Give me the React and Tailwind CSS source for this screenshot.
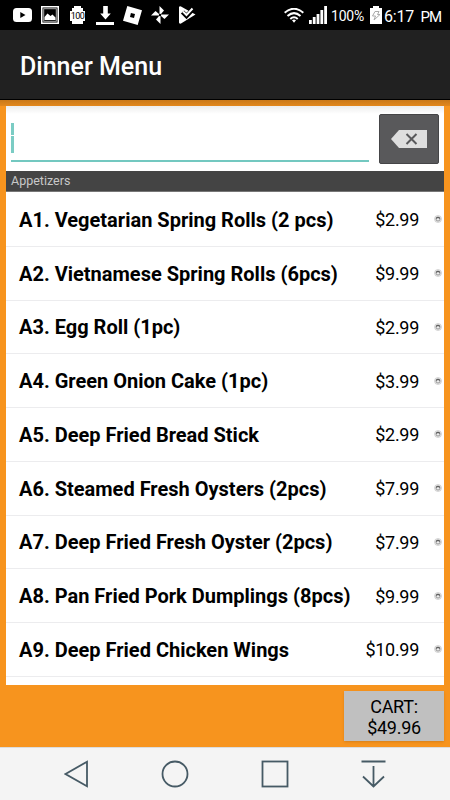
import React, { useState } from 'react';

const items = [
  { name: 'A1. Vegetarian Spring Rolls (2 pcs)', price: '$2.99' },
  { name: 'A2. Vietnamese Spring Rolls (6pcs)', price: '$9.99' },
  { name: 'A3. Egg Roll (1pc)', price: '$2.99' },
  { name: 'A4. Green Onion Cake (1pc)', price: '$3.99' },
  { name: 'A5. Deep Fried Bread Stick', price: '$2.99' },
  { name: 'A6. Steamed Fresh Oysters (2pcs)', price: '$7.99' },
  { name: 'A7. Deep Fried Fresh Oyster (2pcs)', price: '$7.99' },
  { name: 'A8. Pan Fried Pork Dumplings (8pcs)', price: '$9.99' },
  { name: 'A9. Deep Fried Chicken Wings', price: '$10.99' },
];

function StatusBar() {
  return (
    <div className="flex h-[30px] shrink-0 items-center justify-between bg-black pl-[13px] pr-[9px] text-white">
      <div className="flex items-center">
        <svg className="mr-[9px]" width="19" height="14" viewBox="0 0 19 14">
          <rect width="19" height="14" rx="3.5" fill="#fff" />
          <path d="M7.3 4v6l5.2-3z" fill="#000" />
        </svg>
        <svg className="mr-[11px]" width="18" height="18" viewBox="0 0 18 18">
          <rect x="0.75" y="0.75" width="16.5" height="16.5" fill="#000" stroke="#fff" strokeWidth="1.5" />
          <rect x="2.7" y="2.7" width="12.6" height="12.6" fill="none" stroke="#aaa" strokeWidth="1" />
          <path d="M3.5 14V11l3-3.5 3 2.5 2-1.5 3 3V14z" fill="#fff" />
        </svg>
        <div className="mr-[11px] flex w-[15px] flex-col items-center">
          <div className="h-[2px] w-[7px] bg-white" />
          <div className="h-[3px] w-[11px] bg-white" />
          <div className="flex h-[10px] w-[15px] items-center justify-center bg-white text-[9px] leading-[10px] tracking-[-0.5px] text-black">100</div>
          <div className="h-[3px] w-[11px] bg-white" />
        </div>
        <svg className="mr-[9px]" width="18" height="19" viewBox="0 0 18 19">
          <path d="M7.2 0h4.600v7.500h3L9.500 13.500 4.200 7.500h3zM0 16h18v3H0z" fill="#fff" />
        </svg>
        <svg className="mr-[9px]" width="19" height="19" viewBox="0 0 19 19">
          <path fillRule="evenodd" d="M4.300 0 19 4.300 14.700 19 0 14.700zM7.900 7 7 10.900l4 1.100 1-4z" fill="#fff" />
        </svg>
        <svg className="mr-[10px]" width="18" height="18" viewBox="0 0 18 18">
          <g fill="#fff">
            <path d="M8.500 0 13 4.500 10 8H8.500z" />
            <path d="M18 8.500 13.500 13 10 10V8.500z" />
            <path d="M9.500 18 5 13.500 8 10h1.500z" />
            <path d="M0 9.500 4.500 5 8 8v1.500z" />
          </g>
          <circle cx="9" cy="9" r="1.200" fill="#000" />
        </svg>
        <svg width="17" height="18" viewBox="0 0 17 18">
          <path d="M0 1Q.5 0 2 .5L10 5l6.500 3.500L2 17.500Q0 18 0 16.500z" fill="#fff" />
          <path d="M3.500 6 7.500 10 15 2" fill="none" stroke="#000" strokeWidth="4.500" />
          <path d="M4 5.500 7.500 9 13.500 2.500" fill="none" stroke="#fff" strokeWidth="2" />
        </svg>
      </div>
      <div className="flex items-center">
        <svg className="mr-[5px]" width="20" height="15" viewBox="0 0 20 15">
          <g fill="none" stroke="#fff" strokeWidth="2">
            <path d="M0.700 4.800Q10-3.300 19.300 4.800" />
            <path d="M3.500 8Q10 2.200 16.500 8" />
            <path d="M6.300 11Q10 7.600 13.700 11" />
          </g>
          <path d="M8 12.200q2-1.600 4 0L10 14.800z" fill="#fff" />
        </svg>
        <svg className="mr-[4px]" width="18" height="18" viewBox="0 0 18 18">
          <path d="M0 14h2.800v4H0zM3.800 11h2.800v7H3.800zM7.600 8h2.800v10H7.600zM11.400 4h2.800v14h-2.800zM15.200 0H18v18h-2.800z" fill="#fff" />
        </svg>
        <div className="mr-[5px] w-[34px] whitespace-nowrap pt-[2px] text-[14px] leading-5 tracking-[-0.2px]">100%</div>
        <svg className="mr-[2px]" width="12" height="18" viewBox="0 0 12 18">
          <path d="M3 0h6v2h3v16H0V2h3z" fill="#fff" />
          <path d="M5 5.500h4L7.500 8.500H10L4 14l1.500-4H2.500z" fill="none" stroke="#aaa" strokeWidth="1" />
        </svg>
        <div className="flex w-[57px] justify-between whitespace-nowrap pt-[3px] text-[16px] leading-5">
          <span className="tracking-[-0.2px]">6:17</span>
          <span className="text-[15px] tracking-[-1px]">PM</span>
        </div>
      </div>
    </div>
  );
}

function SearchRow() {
  const [query, setQuery] = useState('');

  return (
    <div className="flex h-[65px] shrink-0 bg-linear-to-b from-[#ededed] to-white to-[8px] pl-[5px] pr-[5px]">
      <div className="mr-[10px] mt-[7px] flex h-[49px] flex-1 items-center border-b-2 border-[#73c8c0]">
        <div className="mt-[2px] flex h-[30px] w-[3px] flex-col gap-px">
          <div className="h-[12px] bg-[#7bccc4]" />
          <div className="flex-1 bg-[#7bccc4]" />
        </div>
        <input value={query} onChange={(e) => setQuery(e.target.value)} className="h-full min-w-0 flex-1 text-lg outline-none" />
      </div>
      <button onClick={() => setQuery('')} className="mt-2 flex h-[50px] w-[60px] items-center justify-center rounded-[2px] border border-[#454547] bg-[#59595b]">
        <svg width="36" height="18" viewBox="0 0 36 18">
          <path d="M0 9 8 0h28v18H8z" fill="#dedede" />
          <path d="m15.500 4 10 10m0-10-10 10" stroke="#59595b" strokeWidth="2" />
        </svg>
      </button>
    </div>
  );
}

function MenuItem({ name, price }) {
  return (
    <div className="flex h-[53.75px] shrink-0 items-center border-b-[1.5px] border-[#ececee] pl-[13px] pr-[2px] text-black">
      <div className="flex-1 whitespace-nowrap pt-px text-[20px] font-bold">{name}</div>
      <div className="mr-[15px] pt-px text-[18px] tracking-[-0.3px]">{price}</div>
      <svg width="8" height="8" viewBox="0 0 8 8">
        <circle cx="4" cy="4" r="3.500" fill="#e4e4e4" stroke="#c8c8c8" strokeWidth="0.700" />
        <circle cx="4" cy="4" r="2" fill="#eee" stroke="#888" strokeWidth="0.800" />
        <path d="M2 3.200q2-1.200 4 0" fill="none" stroke="#444" strokeWidth="1" />
      </svg>
    </div>
  );
}

function NavBar() {
  return (
    <div className="flex h-[53px] shrink-0 items-center justify-between border-t border-[#dcdcdc] bg-[#f4f4f4] pl-16 pr-[64px]">
      <svg width="25" height="28" viewBox="0 0 25 28">
        <path d="M1.500 14 23 1.700v24.600z" fill="none" stroke="#465a65" strokeWidth="1.800" />
      </svg>
      <svg width="28" height="28" viewBox="0 0 28 28">
        <circle cx="14" cy="14" r="12.500" fill="none" stroke="#465a65" strokeWidth="1.800" />
      </svg>
      <svg width="28" height="28" viewBox="0 0 28 28">
        <rect x="1.500" y="1.500" width="25" height="25" fill="none" stroke="#465a65" strokeWidth="1.800" />
      </svg>
      <svg width="25" height="28" viewBox="0 0 25 28">
        <path d="M.5 1.500h24M12.500 6v20M2 16.500l10.500 10 10.500-10" fill="none" stroke="#465a65" strokeWidth="1.800" />
      </svg>
    </div>
  );
}

function App() {
  return (
    <div className="flex h-[800px] w-[450px] flex-col overflow-hidden bg-[#f7941e] font-['Roboto',sans-serif]">
      <StatusBar />
      <div className="flex h-[70px] shrink-0 items-center border-b border-black bg-[#212121] pl-5 pt-[5px] text-[25px] font-medium text-white">
        Dinner Menu
      </div>
      <div className="h-[6px] shrink-0 bg-linear-to-b from-[#c97818] to-[#e2871c]" />
      <div className="mx-[6px] flex h-[579px] shrink-0 flex-col overflow-hidden bg-white">
        <SearchRow />
        <div className="mb-[1.5px] flex h-[20.5px] shrink-0 items-center border-b border-[#777] bg-[#444] pl-[5px] pt-[2px] text-[12.5px] text-[#c8c8c8]">Appetizers</div>
        {items.map((item) => (
          <MenuItem key={item.name} name={item.name} price={item.price} />
        ))}
      </div>
      <div className="flex flex-1 items-start justify-end pr-[6px] pt-[6px]">
        <button className="h-[50px] w-[100px] bg-[#c0c0c0] pt-px text-[18px] leading-[21px] tracking-[-0.3px] text-black shadow-sm">
          CART:<br />$49.96
        </button>
      </div>
      <NavBar />
    </div>
  );
}

export default App;
